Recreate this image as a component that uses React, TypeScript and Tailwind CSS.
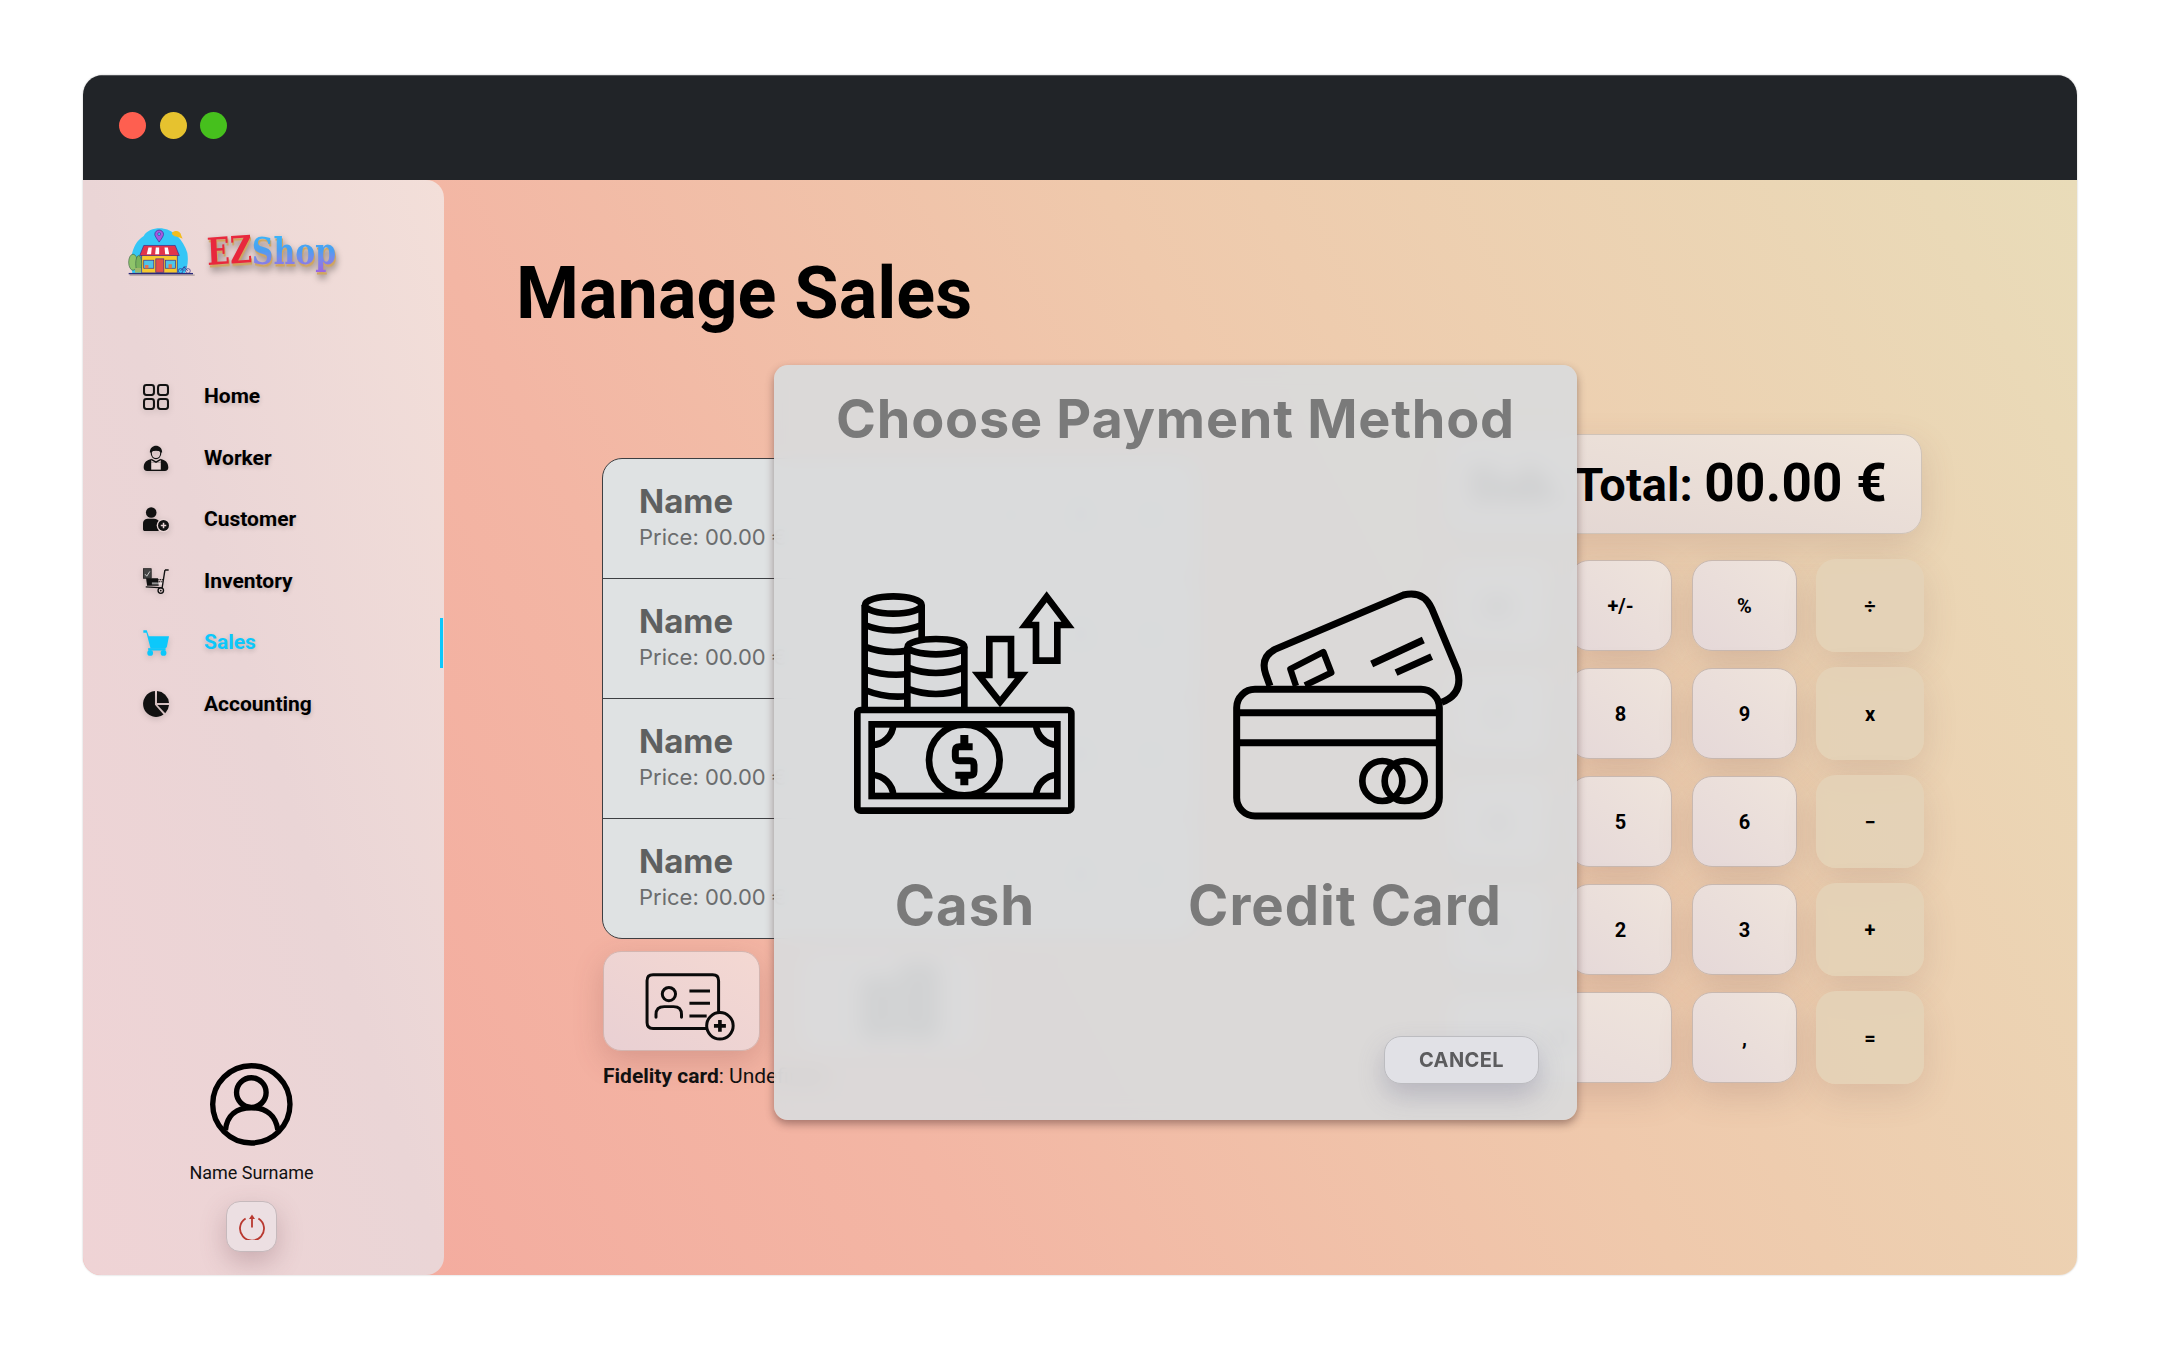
import React from "react";
import { Minus, User, Plus } from "lucide-react";

const navItems = ["Home", "Worker", "Customer", "Inventory", "Sales", "Accounting"];

function NavIcon({ name }: { name: string }) {
  if (name === "Home")
    return (
      <svg viewBox="0 0 76 76" className="w-[26px] h-[26px]" fill="none" stroke="#111" strokeWidth="6">
        <rect x="3" y="3" width="29" height="29" rx="7" />
        <rect x="44" y="3" width="29" height="29" rx="7" />
        <rect x="3" y="44" width="29" height="29" rx="7" />
        <rect x="44" y="44" width="29" height="29" rx="7" />
      </svg>
    );
  if (name === "Worker")
    return (
      <svg viewBox="0 0 76 76" className="w-[26px] h-[26px]">
        <path d="M20 22 C20 -4 56 -4 56 22 L52 22 C48 14 28 14 24 22Z" fill="#111" />
        <path d="M24 22 C24 12 52 12 52 22 C52 46 24 46 24 22Z" fill="none" stroke="#111" strokeWidth="3.5" />
        <path d="M2 66 C2 50 12 44 24 41 L24 52 L52 52 L52 41 C64 44 74 50 74 66 C74 72 70 76 64 76 L12 76 C6 76 2 72 2 66Z" fill="#111" />
        <path d="M24 52 H52 V72 H24Z" fill="#ead6d6" />
        <path d="M24 42 L38 50 L52 42" fill="none" stroke="#111" strokeWidth="4" />
      </svg>
    );
  if (name === "Customer")
    return (
      <svg viewBox="0 0 76 76" className="w-[26px] h-[26px]">
        <circle cx="24" cy="16" r="15.5" fill="#111" />
        <path d="M0 48 C0 38 8 34 16 34 H32 C40 34 46 38 48 44 L46 70 H6 C2 70 0 68 0 64Z" fill="#111" />
        <circle cx="60" cy="54" r="20" fill="#ead6d6" />
        <circle cx="60" cy="54" r="16" fill="#111" />
        <path d="M60 46 V62 M52 54 H68" stroke="#ead6d6" strokeWidth="4.5" />
      </svg>
    );
  if (name === "Inventory")
    return (
      <svg viewBox="0 0 76 76" className="w-[26px] h-[26px]">
        <rect x="1" y="2" width="23" height="28" fill="#444" stroke="#111" strokeWidth="2" />
        <path d="M6 18 L11 24 L20 10" fill="none" stroke="#ddd" strokeWidth="2.5" />
        <path d="M9 30 H44 L46 52 H12Z" fill="#111" />
        <path d="M26 42 H58 L58 48 H26Z" fill="#fff" opacity="0.55" />
        <path d="M64 6 H75 M64 6 L56 58 L8 55" fill="none" stroke="#111" strokeWidth="4" />
        <circle cx="52" cy="66" r="8" fill="none" stroke="#111" strokeWidth="4" />
        <circle cx="52" cy="66" r="2.5" fill="#111" />
        <path d="M40 34 H60 M42 40 H58" stroke="#111" strokeWidth="3" strokeDasharray="3 2" />
      </svg>
    );
  if (name === "Sales")
    return (
      <svg viewBox="0 0 76 76" className="w-[26px] h-[26px]" fill="#0cc8fb">
        <path d="M1 1 H11 L17 18 H76 L70 48 C69 51 67 53 64 53 H22 L10 8 H1Z" />
        <path d="M15 53 H66 V60 H15Z" />
        <circle cx="21" cy="67" r="8.5" />
        <circle cx="60" cy="67" r="8.5" />
      </svg>
    );
  return (
    <svg viewBox="0 0 76 76" className="w-[26px] h-[26px]" fill="#111">
      <path d="M35 0 A38 38 0 1 0 60 69 L35 40Z" />
      <path d="M41 0 A38 38 0 0 1 76 35 H41Z" />
      <path d="M42 41 H76 A38 38 0 0 1 65 65Z" />
    </svg>
  );
}

function Logo() {
  return (
    <svg viewBox="175 470 200 152" className="w-[67px] h-[51px] shrink-0">
      <path d="M188 610 C178 570 188 520 222 500 C232 480 262 474 282 478 C310 482 340 510 352 550 C356 575 352 595 345 610Z" fill="#35c6f6" />
      <path d="M306 490 C316 480 332 484 334 498 L338 508 C326 500 316 506 314 500 C310 498 306 496 306 490Z" fill="#f2bd1e" />
      <path d="M268 518 C258 504 255 498 255 495 A13 13 0 0 1 281 495 C281 498 278 504 268 518Z" fill="#a55ae0" stroke="#3a2a8a" strokeWidth="2" />
      <circle cx="268" cy="494" r="4.5" fill="#35c6f6" stroke="#3a2a8a" strokeWidth="1.5" />
      <rect x="216" y="556" width="106" height="54" fill="#f6c92d" stroke="#3a2a8a" strokeWidth="2" />
      <path d="M222 528 H316 L328 558 H210Z" fill="#e2344a" stroke="#3a2a8a" strokeWidth="2" />
      <path d="M236 534 H246 L244 554 H231Z M258 534 H268 V554 H256Z M284 534 H294 L298 554 H286Z" fill="#fff" />
      <rect x="258" y="568" width="24" height="40" fill="#e2504a" stroke="#3a2a8a" strokeWidth="2" />
      <rect x="222" y="572" width="30" height="24" fill="#4fc4e8" stroke="#3a2a8a" strokeWidth="2" />
      <rect x="287" y="572" width="30" height="24" fill="#4fc4e8" stroke="#3a2a8a" strokeWidth="2" />
      <path d="M226 596 V586 H236 V596Z M296 596 V584 H306 V596Z" fill="#e9744a" />
      <ellipse cx="190" cy="578" rx="13" ry="24" fill="#8fc46a" stroke="#3f6a4a" strokeWidth="2" />
      <ellipse cx="207" cy="582" rx="9" ry="24" fill="#78b25c" stroke="#3f6a4a" strokeWidth="2" />
      <rect x="196" y="595" width="18" height="14" fill="#9fb76a" />
      <circle cx="332" cy="604" r="7" fill="none" stroke="#3a2a8a" strokeWidth="2" />
      <circle cx="354" cy="604" r="7" fill="none" stroke="#3a2a8a" strokeWidth="2" />
      <path d="M332 604 L342 592 L354 604 M342 592 H350 M342 604 L342 592" fill="none" stroke="#3a2a8a" strokeWidth="2" />
      <rect x="177" y="610" width="192" height="4" fill="#2a2a7a" />
      <rect x="180" y="614" width="194" height="5" fill="#000" opacity="0.2" />
    </svg>
  );
}

function CashIcon() {
  const s = "#000";
  return (
    <svg viewBox="0 0 810 810" className="w-[270px] h-[270px]" fill="none" stroke={s} strokeWidth="20">
      <path d="M104 420 V105 M275 105 V230" />
      <ellipse cx="190" cy="105" rx="85" ry="26" />
      <path d="M104 165 Q190 198 275 165 M104 230 Q190 262 275 230 M104 298 Q170 320 232 312 M104 360 Q170 386 232 378" />
      <path d="M232 420 V230 A85 26 0 0 1 403 230 V420Z" fill="#d9dadc" stroke="none" />
      <path d="M232 420 V230 M403 230 V420" />
      <ellipse cx="318" cy="230" rx="85" ry="23" />
      <path d="M232 292 Q318 326 403 292 M232 356 Q318 388 403 356" />
      <rect x="82" y="420" width="642" height="302" rx="10" fill="#d9dadc" />
      <rect x="125" y="463" width="557" height="215" />
      <circle cx="403" cy="570" r="106" fill="#d9dadc" />
      <path d="M125 525 A65 65 0 0 0 190 463 M682 525 A65 65 0 0 1 618 463 M125 615 A65 65 0 0 1 190 678 M682 615 A65 65 0 0 0 618 678" />
      <path d="M428 530 H388 Q376 530 376 542 V560 Q376 572 388 572 H420 Q432 572 432 584 V604 Q432 616 420 616 H376" strokeWidth="21" />
      <path d="M403 495 V530 M403 616 V646" strokeWidth="24" />
      <path d="M478 207 H543 V315 H575 L510 396 L446 315 H478Z" strokeLinejoin="miter" />
      <path d="M618 272 H682 V165 H714 L650 80 L586 165 H618Z" strokeLinejoin="miter" />
    </svg>
  );
}

function CardIcon() {
  return (
    <svg viewBox="0 0 810 810" className="w-[270px] h-[270px]" fill="none" stroke="#000" strokeWidth="21">
      <path d="M180 348 L167 312 Q150 262 195 238 L580 75 Q640 60 665 115 L742 300 Q762 372 695 397" />
      <path d="M258 348 L241 297 L340 246 L364 308 L285 346" strokeLinejoin="round" strokeWidth="19" />
      <path d="M485 282 L640 210 M558 308 L665 260" />
      <rect x="80" y="358" width="608" height="380" rx="55" />
      <path d="M80 428 H688 M80 518 H688" />
      <circle cx="517" cy="633" r="60" strokeWidth="20" />
      <circle cx="584" cy="633" r="60" strokeWidth="20" />
    </svg>
  );
}

function FidelityIcon() {
  return (
    <svg viewBox="40 66 468 294" className="w-full h-full" fill="none" stroke="#0a0a0a" strokeWidth="9">
      <path d="M350 296 H188 Q170 296 170 278 V152 Q170 134 188 134 H368 Q386 134 386 152 V246" />
      <circle cx="236" cy="192" r="20" />
      <path d="M197 262 V254 Q197 230 222 230 H250 Q274 230 274 254 V262" strokeLinecap="round" />
      <path d="M298 183 H360 M298 220 H360 M298 258 H350" />
      <circle cx="390" cy="288" r="40" />
      <path d="M390 270 V306 M372 288 H408" strokeWidth="11" />
    </svg>
  );
}

const keys = ["AC", "+/-", "%", "÷", "7", "8", "9", "x", "4", "5", "6", "−", "1", "2", "3", "+", "0", ",", "="];

function Key({ label }: { label: string }) {
  const op = ["÷", "x", "−", "+", "="].includes(label);
  const wide = label === "0";
  return (
    <button
      className={
        (wide ? "col-span-2 " : "") +
        (op
          ? "bg-[#e3d2b7]/90 -m-[1px] rounded-[20px] shadow-[0_12px_34px_rgba(120,80,80,0.16)] "
          : "bg-gradient-to-tr from-[#e5d8d8] to-[#efe4dc] border border-[#c8b8b0] rounded-[20px] shadow-[0_12px_34px_rgba(120,80,80,0.2)] ") +
        "flex items-center justify-center font-[Roboto,sans-serif] font-bold text-[20px] text-black"
      }
    >
      {label}
    </button>
  );
}

export default function App() {
  return (
    <div className="w-[2160px] h-[1350px] bg-white pt-[75px] pl-[83px] overflow-hidden font-[Roboto,sans-serif]">
      <div className="w-[1994px] h-[1200px] flex flex-col rounded-t-[20px] rounded-b-[18px] overflow-hidden shadow-[0_0_2px_rgba(0,0,0,0.25)]">
        {/* title bar */}
        <div className="h-[105px] shrink-0 bg-[#212428] border-t border-[#55585c] flex items-center gap-[13.5px] pl-[36px] pb-[6px]">
          <span className="w-[27px] h-[27px] rounded-full bg-[#fe5f50]" />
          <span className="w-[27px] h-[27px] rounded-full bg-[#e6c22f]" />
          <span className="w-[27px] h-[27px] rounded-full bg-[#46c01d]" />
        </div>

        <div className="flex-1 flex min-h-0 bg-[linear-gradient(62deg,#f4a69c_0%,#f3b6a4_35%,#efc9ac_62%,#e9dcb9_100%)]">
          {/* sidebar */}
          <aside className="w-[361px] shrink-0 flex flex-col rounded-r-[18px] bg-gradient-to-tr from-[#efd3d5] via-[#ead5d6] to-[#f3dfd9]">
            <div className="h-[186px] shrink-0 pl-[45px] pt-[46px] flex items-start">
              <Logo />
              <div className="ml-[12px] mt-[3px] font-['DejaVu_Serif',serif] font-bold text-[30px] leading-[44px] scale-y-[1.25] flex [filter:drop-shadow(1px_2px_0_#cfa560)_drop-shadow(1px_3px_3px_rgba(0,0,0,0.35))]">
                <span className="text-[#e8283c] inline-block -rotate-3">EZ</span>
                <span className="bg-gradient-to-b from-[#22c8ff] via-[#4c9cf0] to-[#a94fdc] bg-clip-text text-transparent">Shop</span>
              </div>
            </div>
            <nav className="flex flex-col">
              {navItems.map((n) => (
                <div key={n} className="relative h-[61.5px] flex items-center pl-[60px]">
                  <span className="w-[61px] shrink-0 flex drop-shadow-[0_2px_3px_rgba(0,0,0,0.15)]">
                    <NavIcon name={n} />
                  </span>
                  <span
                    className={
                      "text-[21px] font-bold [text-shadow:0_2px_5px_rgba(0,0,0,0.18)] " +
                      (n === "Sales" ? "text-[#0cc8fb]" : "text-black")
                    }
                  >
                    {n}
                  </span>
                  {n === "Sales" && (
                    <span className="absolute right-[1px] top-[6px] w-[3px] h-[50px] bg-[#0cc8fb]" />
                  )}
                </div>
              ))}
            </nav>
            <div className="mt-auto pb-[23px] pr-[24px] flex flex-col items-center">
              <svg viewBox="330 95 247 247" className="w-[83px] h-[83px]" fill="none" stroke="#000" strokeWidth="16">
                <circle cx="453" cy="218" r="115" />
                <circle cx="453" cy="183" r="44" />
                <path d="M376 295 C380 250 410 228 453 228 C496 228 526 250 532 295" />
              </svg>
              <div className="mt-[15px] text-[18px] leading-[24px] text-[#111]">Name Surname</div>
              <button className="mt-[16px] w-[51px] h-[51px] rounded-[14px] bg-[#ecdfe2] border border-[#c6b9bc] flex items-center justify-center shadow-[0_10px_26px_rgba(110,70,80,0.28)]">
                <svg viewBox="0 0 26 26" className="w-[26px] h-[26px]" fill="none" stroke="#b9382f" strokeWidth="1.8">
                  <path d="M6.6 4.4 A12 12 0 1 0 19.4 4.4" />
                  <path d="M13 4 V13.5" />
                  <path d="M13 0.5 L10 5 H16Z" fill="#b9382f" stroke="none" />
                </svg>
              </button>
            </div>
          </aside>

          {/* main */}
          <main className="relative flex-1 min-w-0">
            <div className="h-[254px] pl-[72px] pt-[74px]">
              <h1 className="text-[72px] leading-[80px] font-bold text-black">Manage Sales</h1>
            </div>

            <div className="flex items-start pl-[158px]">
              {/* left column */}
              <div className="w-[596px] shrink-0 mt-[24px]">
                <div className="h-[481px] rounded-[20px] border border-[#3d3f42] bg-[#dfe2e3] overflow-hidden flex flex-col divide-y divide-[#3d3f42]">
                  {[0, 1, 2, 3].map((i) => (
                    <div key={i} className="flex-1 flex items-start justify-between pl-[36px] pr-[30px] pt-[22px] font-[Inter,sans-serif]">
                      <div>
                        <div className="text-[33px] leading-[40px] font-bold text-[#5e6060]">Name</div>
                        <div className="text-[22px] leading-[33px] text-[#6b6d6e]">Price: 00.00 €</div>
                      </div>
                      <div className="flex items-center gap-[38px] pt-[18px] text-[#6a9fc4]">
                        <Minus size={32} />
                        <User size={32} />
                        <Plus size={32} />
                      </div>
                    </div>
                  ))}
                </div>
                <div className="mt-[12px] flex gap-[40px] pl-[1px]">
                  <button className="w-[157px] h-[100px] rounded-[18px] border border-[#d3b5b0] bg-gradient-to-tr from-[#e9d0d3] to-[#f4d8d2] shadow-[0_10px_30px_rgba(120,60,60,0.22)]">
                    <FidelityIcon />
                  </button>
                  <div className="w-[178px] h-[100px] rounded-[18px] bg-[#e6d4d2] flex items-center justify-center pl-[24px]">
                    <svg viewBox="0 0 80 76" className="w-[80px] h-[76px]" fill="#666">
                      <rect x="0" y="14" width="36" height="62" rx="6" />
                      <rect x="38" y="0" width="40" height="76" rx="6" />
                    </svg>
                  </div>
                </div>
                <div className="mt-[13px] pl-[1px] text-[21px] leading-[24px] text-[#111]">
                  <b className="font-bold">Fidelity card</b>: Undefined
                </div>
              </div>

              {/* right column */}
              <div className="ml-[249px] w-[475px] shrink-0">
                <div className="h-[100px] rounded-[20px] border border-[#cfc3b8] bg-gradient-to-tr from-[#e2d5d2] to-[#f0e5db] shadow-[0_12px_34px_rgba(120,80,80,0.18)] flex items-center justify-end pr-[34px] text-black whitespace-nowrap">
                  <span className="text-[47px] font-bold mt-[3px]">Sub. Total:&nbsp;</span>
                  <span className="text-[53px] font-bold tracking-[0.3px]">00.00 €</span>
                </div>
                <div className="mt-[26px] grid grid-cols-[102px_103px_105px_106px] grid-rows-[repeat(5,91px)] gap-x-[20px] gap-y-[17px]">
                  {keys.map((k) => (
                    <Key key={k} label={k} />
                  ))}
                </div>
              </div>
            </div>

            {/* payment modal */}
            <div className="absolute left-[330px] top-[185px] w-[803px] h-[755px] rounded-[14px] bg-[#d9dadc]/[0.93] backdrop-blur-[10px] shadow-[0_4px_8px_rgba(70,40,40,0.45)] font-[Inter,sans-serif] flex flex-col">
              <h2 className="mt-[21px] text-center text-[54px] leading-[66px] font-bold tracking-[0.75px] text-[#7a7a7a]">
                Choose Payment Method
              </h2>
              <div className="mt-[118px] pl-[56px] flex gap-[110px]">
                <div className="w-[270px] flex flex-col items-center">
                  <CashIcon />
                  <div className="mt-[30px] text-[54.5px] leading-[70px] font-bold tracking-[1px] text-[#7a7a7a] whitespace-nowrap">Cash</div>
                </div>
                <div className="w-[270px] flex flex-col items-center">
                  <CardIcon />
                  <div className="mt-[30px] text-[54.5px] leading-[70px] font-bold tracking-[1px] text-[#7a7a7a] whitespace-nowrap">Credit Card</div>
                </div>
              </div>
              <div className="mt-auto pb-[36px] pr-[38px] flex justify-end">
                <button className="w-[155px] h-[48px] rounded-[17px] border border-[#bcbcc0] bg-[#e1e1e6] text-[20px] font-bold text-[#5c5c5e] tracking-[0.4px] shadow-[0_12px_26px_rgba(110,110,140,0.32)]">
                  CANCEL
                </button>
              </div>
            </div>
          </main>
        </div>
      </div>
    </div>
  );
}
